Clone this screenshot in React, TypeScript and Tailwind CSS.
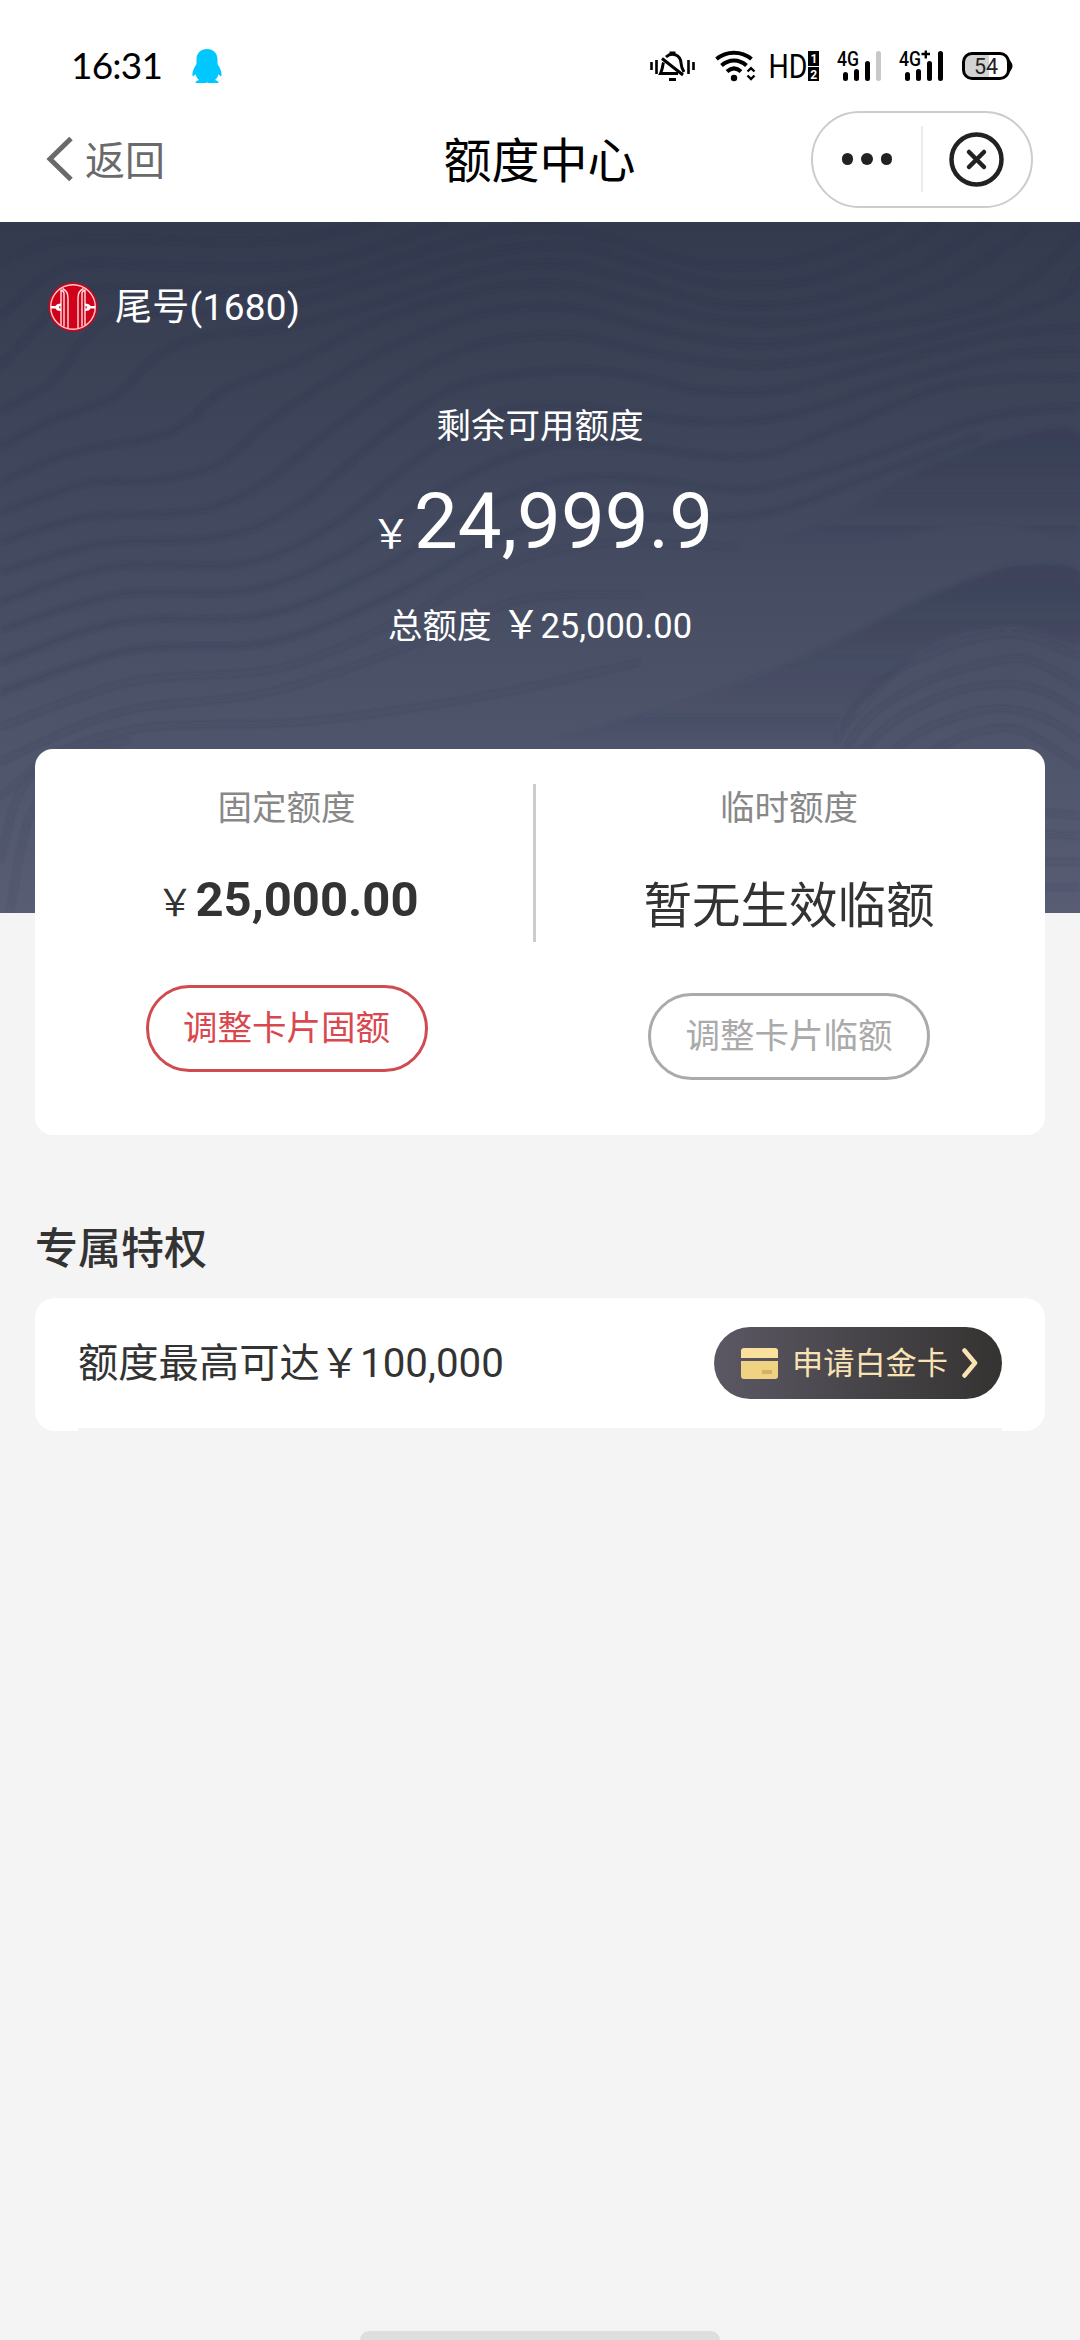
type Point = [number, number];

// Contour lines of the hero background
const contours: Point[][] = [
  [[0, 41], [50, 20], [120, 17], [240, 20], [310, 15], [380, 0]],
  [[0, 95], [41, 58], [86, 41], [172, 45], [275, 45], [344, 35], [450, 0]],
  [[0, 145], [34, 108], [70, 75], [120, 66], [230, 70], [330, 58], [420, 30], [520, 6], [600, 14], [700, 42], [790, 40], [880, 10], [900, 0]],
  [[0, 188], [52, 160], [86, 115], [130, 92], [250, 90], [380, 58], [480, 32], [570, 24], [640, 42], [720, 62], [810, 58], [900, 25], [940, 0]],
  [[0, 225], [52, 198], [114, 175], [145, 145], [172, 125], [213, 113], [286, 105], [379, 81], [480, 50], [560, 42], [640, 60], [720, 82], [820, 78], [920, 45], [990, 0]],
  [[0, 261], [69, 231], [155, 215], [190, 198], [224, 168], [293, 141], [379, 98], [482, 68], [560, 62], [640, 80], [720, 98], [810, 98], [930, 68], [1010, 20], [1030, 0]],
  [[0, 291], [86, 261], [155, 258], [220, 241], [275, 195], [379, 131], [482, 91], [570, 86], [660, 108], [760, 122], [860, 108], [980, 84], [1050, 40], [1080, 5]],
  [[0, 320], [86, 295], [189, 290], [258, 265], [327, 211], [413, 151], [490, 120], [575, 114], [660, 132], [760, 143], [870, 128], [1000, 96], [1060, 75], [1080, 48]],
  [[0, 350], [100, 322], [220, 315], [300, 282], [380, 215], [460, 164], [560, 148], [625, 152], [700, 168], [780, 168], [880, 142], [1000, 113], [1080, 106]],
  [[0, 380], [110, 345], [240, 342], [330, 305], [420, 235], [500, 190], [580, 185], [690, 199], [780, 195], [880, 165], [1000, 134], [1080, 130]],
  [[0, 408], [120, 372], [250, 368], [350, 328], [440, 268], [530, 228], [609, 222], [747, 235], [833, 208], [953, 163], [1080, 155]],
  [[0, 440], [120, 400], [260, 394], [370, 352], [460, 298], [540, 263], [612, 255], [712, 265], [764, 265], [850, 241], [988, 195], [1080, 185]],
  [[0, 470], [130, 428], [270, 420], [390, 374], [480, 325], [570, 292], [680, 296], [770, 290], [860, 258], [980, 214]],
];

// Fainter lines towards the bottom left and on the mound at the right
const faintContours: Point[][] = [
  [[0, 505], [130, 460], [280, 446], [400, 398], [500, 345], [600, 322], [740, 325]],
  [[0, 540], [120, 490], [270, 470], [420, 420], [520, 378], [640, 372]],
  [[0, 575], [60, 530], [150, 505], [300, 500], [480, 475], [640, 440]],
  [[0, 640], [20, 570], [60, 535], [130, 518]],
  [[10, 690], [28, 600], [60, 560], [120, 532]],
  [[836, 520], [857, 481], [902, 445], [970, 418], [1022, 413], [1080, 435]],
  [[846, 525], [875, 490], [930, 458], [1000, 438], [1035, 440], [1080, 464]],
  [[860, 530], [900, 495], [960, 468], [1010, 462], [1045, 470], [1080, 490]],
  [[890, 530], [930, 505], [990, 487], [1040, 494], [1080, 518]],
  [[930, 530], [970, 512], [1020, 508], [1080, 545]],
  [[1040, 590], [1080, 594]],
  [[1040, 612], [1080, 614]],
  [[1040, 640], [1080, 640]],
  [[1040, 665], [1080, 665]],
];

const folds: Point[][] = [
  [[740, 325], [833, 298], [919, 248], [1005, 217], [1080, 213], [1080, 310], [980, 300], [880, 320]],
  [[540, 518], [660, 487], [764, 451], [833, 421], [919, 378], [988, 351], [1030, 342], [1080, 351], [1080, 420], [1010, 405], [920, 430], [830, 527]],
];

// Catmull-Rom spline through the given points
const spline = (pts: Point[]) => {
  let d = `M${pts[0][0]} ${pts[0][1]}`;
  for (let i = 0; i < pts.length - 1; i++) {
    const p0 = pts[i - 1] ?? pts[i];
    const p1 = pts[i];
    const p2 = pts[i + 1];
    const p3 = pts[i + 2] ?? p2;
    d += `C${p1[0] + (p2[0] - p0[0]) / 6} ${p1[1] + (p2[1] - p0[1]) / 6} ${p2[0] - (p3[0] - p1[0]) / 6} ${p2[1] - (p3[1] - p1[1]) / 6} ${p2[0]} ${p2[1]}`;
  }
  return d;
};

const Waves = () => (
  <svg className="absolute inset-0 h-full w-full" viewBox="0 0 1080 691" fill="none">
    <defs>
      <linearGradient id="fold" x1="0" y1="0" x2="0" y2="1">
        <stop offset="0" stopColor="#2f3550" stopOpacity="0.4" />
        <stop offset="1" stopColor="#2f3550" stopOpacity="0" />
      </linearGradient>
      <filter id="soft" x="-5%" y="-5%" width="110%" height="110%">
        <feGaussianBlur stdDeviation="2.2" />
      </filter>
    </defs>
    <g filter="url(#soft)">
      {folds.map((f, i) => (
        <path key={i} d={spline(f)} fill="url(#fold)" />
      ))}
      {contours.map((c, i) => (
        <path key={i} d={spline(c)} stroke="#2b3048" strokeOpacity="0.24" strokeWidth="5" />
      ))}
      {faintContours.map((c, i) => (
        <path key={i} d={spline(c)} stroke="#2b3048" strokeOpacity="0.15" strokeWidth="5" />
      ))}
    </g>
  </svg>
);

const StatusBar = () => (
  <div className="flex h-[102px] items-center justify-between pt-[30px] pr-[67px] pl-[71px]">
    <div className="flex items-center">
      <span className="mb-[3px] w-[121px] font-['Lato'] text-[37px] leading-none tracking-[-0.8px] text-black">16:31</span>
      <svg width="30" height="34" viewBox="0 0 30 34" fill="#00c8ff">
        <path d="M15 0C8.500 0 4.500 4.500 4.500 10.500V15C2.500 18 0 22.500 0.500 26.500C0.800 28 2.300 27 3.500 25C4 27.500 5.200 29.500 7 31C5 31.500 3.500 32.300 3.500 34H14L15 33.300L16 34H26.500C26.500 32.300 25 31.500 23 31C24.800 29.500 26 27.500 26.500 25C27.700 27 29.200 28 29.500 26.500C30 22.500 27.500 18 25.500 15V10.500C25.500 4.500 21.500 0 15 0Z" />
      </svg>
    </div>
    <svg width="364" height="60" viewBox="648 36 364 60" fill="none" stroke="#000">
      {/* silent bell */}
      <g strokeWidth="2.600">
        <path d="M650.500 62V70M655.500 60V74M692.500 62V70M687.500 60V74" />
        <path d="M662.500 62.500C661.500 65 662 68 659.500 73.500H677M665 57C671 51.500 679.500 55 680 63C680.300 67 681 69 683 72M661 58.500L682 75" strokeWidth="3" />
        <path d="M668.500 53H674.500M668 79.500H675" strokeWidth="3" />
      </g>
      {/* wifi */}
      <g strokeWidth="4">
        <path d="M715.500 59C725.500 50.500 740.500 50.500 750.500 59M720.500 65.500C728 58.800 738 58.800 745.500 65.500M726 71.500C730.500 67.500 735.500 67.500 740 71.500" />
      </g>
      <circle cx="733" cy="78" r="3.200" fill="#000" stroke="none" />
      <path d="M746.500 71.500L750 68.200L753.500 71.500M746.500 75.500L750 79L753.500 75.500" strokeWidth="2.400" />
      {/* HD */}
      <text x="767.500" y="78" fontFamily="Roboto" fontSize="33" fill="#000" stroke="none" textLength="39" lengthAdjust="spacingAndGlyphs">HD</text>
      <rect x="807" y="51" width="11" height="15" fill="#000" stroke="none" />
      <rect x="807" y="67" width="11" height="14" fill="#000" stroke="none" />
      <text x="809.500" y="63" fontFamily="Roboto" fontWeight="700" fontSize="12" fill="#fff" stroke="none">1</text>
      <text x="809.300" y="78.500" fontFamily="Roboto" fontWeight="700" fontSize="12" fill="#fff" stroke="none">2</text>
      {/* signals */}
      <text x="836" y="66" fontFamily="Roboto" fontWeight="500" fontSize="20" fill="#000" stroke="none" textLength="22" lengthAdjust="spacingAndGlyphs">4G</text>
      <g strokeWidth="5" strokeLinecap="round">
        <path d="M844.500 74.500V78.500M855.500 71.500V78.500M866.500 63.500V78.500" />
        <path d="M877.500 53.500V78.500" stroke="#c8c8c8" />
        <path d="M906.500 74.500V78.500M917.500 71.500V78.500M928.500 63.500V78.500M939.500 53.500V78.500" />
      </g>
      <text x="898" y="66" fontFamily="Roboto" fontWeight="500" fontSize="20" fill="#000" stroke="none" textLength="22" lengthAdjust="spacingAndGlyphs">4G</text>
      <path d="M920.500 54H929M924.800 50.500V58.500" strokeWidth="2.400" />
      {/* battery */}
      <path d="M971 54H988V78H971Q963 78 963 70V62Q963 54 971 54Z" fill="#d2d2d2" stroke="none" />
      <rect x="962.500" y="53.500" width="45" height="25" rx="8.500" strokeWidth="3" />
      <path d="M1009 62Q1012 66 1009 70Z" fill="#000" strokeWidth="2" />
      <text x="973" y="73.500" fontFamily="Roboto" fontSize="21.500" fill="#222" stroke="none">54</text>
    </svg>
  </div>
);

const NavBar = () => (
  <div className="flex h-[120px] items-center justify-between pr-[47px] pb-[6px] pl-[45px]">
    <div className="flex w-[223px] items-center gap-[12px] text-[#6a6a6a]">
      <svg width="28" height="44" viewBox="0 0 28 44" fill="none" stroke="currentColor" strokeWidth="5">
        <path d="M26 1.500L5 22L26 42.500" />
      </svg>
      <span className="mt-[5px] text-[40px] leading-none">返回</span>
    </div>
    <h1 className="mt-[5px] text-[48px] leading-none text-black">额度中心</h1>
    <div className="flex h-[97px] w-[222px] items-center rounded-full border-2 border-[#cccccc]">
      <div className="flex h-[66px] w-[110px] items-center justify-center gap-[8px] border-r-2 border-[#ebebeb]">
        <i className="size-[11.500px] rounded-full bg-[#222222]" />
        <i className="size-[11.500px] rounded-full bg-[#222222]" />
        <i className="size-[11.500px] rounded-full bg-[#222222]" />
      </div>
      <svg className="ml-[26px]" width="55" height="55" viewBox="0 0 55 55" fill="none" stroke="#222">
        <circle cx="27.500" cy="27.500" r="25" strokeWidth="4.500" />
        <path d="M20 20L35 35M35 20L20 35" strokeWidth="4.500" strokeLinecap="round" />
      </svg>
    </div>
  </div>
);

const BankLogo = () => (
  <svg width="50" height="50" viewBox="0 0 50 50" fill="none">
    <circle cx="25" cy="25" r="24.500" fill="#d0021b" />
    <circle cx="25" cy="25" r="22.300" stroke="#ffc9c9" strokeWidth="1.400" />
    <g stroke="#ffdcdc" strokeWidth="1.400">
      <path d="M13 7.500V43M16 44.500V11.500Q16 9 13 8M20 46.500V16Q20 9 14.500 6.500" />
      <path d="M37 7.500V43M34 44.500V11.500Q34 9 37 8M30 46.500V16Q30 9 35.500 6.500" />
    </g>
    <path d="M3 24H7.500Q8.500 21.500 13 21.500V23.500Q11 24 11 25.300Q11 26.500 13 27V29Q8.500 29 7.500 26.500H3ZM47 24H42.500Q41.500 21.500 37 21.500V23.500Q39 24 39 25.300Q39 26.500 37 27V29Q41.500 29 42.500 26.500H47Z" fill="#fff" />
  </svg>
);

const Hero = () => (
  <section className="relative h-[691px] bg-linear-to-b from-[#343a4e] via-[#454c61] to-[#585d74] text-white">
    <Waves />
    <div className="relative flex flex-col items-center">
      <div className="flex w-full items-center gap-[17px] pt-[58px] pl-[48px]">
        <BankLogo />
        <span className="mt-[3px] text-[37px] leading-[50px] tracking-[0.3px]">尾号(1680)</span>
      </div>
      <p className="mt-[68px] text-[34.500px] leading-[50px]">剩余可用额度</p>
      <p className="mt-[26px] ml-[4px] flex items-baseline leading-[90px]">
        <span className="mr-[3px] text-[40px]">￥</span>
        <span className="text-[78px]">24,999.9</span>
      </p>
      <p className="mt-[20px] flex items-baseline text-[34.500px] leading-[50px]">
        <span>总额度</span>
        <span className="ml-[10px] text-[39px]">￥</span>
        <span>25,000.00</span>
      </p>
    </div>
  </section>
);

const LimitCard = () => (
  <section className="relative mx-[35px] -mt-[164px] flex h-[386px] rounded-[18px] bg-white">
    <div className="flex w-[503px] flex-col items-center">
      <p className="mt-[34px] text-[34.500px] leading-[50px] text-[#888888]">固定额度</p>
      <p className="mt-[32px] ml-[2px] flex items-baseline leading-[70px] text-[#333333]">
        <span className="mr-[2px] text-[37px]">￥</span>
        <span className="text-[49px] font-bold">25,000.00</span>
      </p>
      <button className="mt-[46px] h-[87px] w-[282px] rounded-full border-3 border-[#cf4b50] text-[34.500px] leading-none text-[#d9484e]">
        调整卡片固额
      </button>
    </div>
    <div className="-ml-[5px] mt-[35px] h-[158px] w-[3px] bg-[#cccccc]" />
    <div className="ml-[2px] flex w-[502px] flex-col items-center">
      <p className="mt-[34px] text-[34.500px] leading-[50px] text-[#888888]">临时额度</p>
      <p className="mt-[39px] text-[48.500px] leading-[70px] text-[#333333]">暂无生效临额</p>
      <button className="mt-[51px] h-[87px] w-[282px] rounded-full border-3 border-[#aaaaaa] text-[34.500px] leading-none text-[#aaaaaa]">
        调整卡片临额
      </button>
    </div>
  </section>
);

const Privileges = () => (
  <section className="mx-[35px] mt-[84px]">
    <h2 className="text-[43px] leading-[60px] font-medium text-[#333333]">专属特权</h2>
    <div className="mt-[19px] rounded-[20px] bg-white px-[43px]">
      <div className="flex h-[133px] items-center justify-between border-b-3 border-[#f4f4f4]">
        <span className="mt-[2px] text-[40.300px] leading-none text-[#333333]">额度最高可达￥100,000</span>
        <button className="flex h-[72px] w-[288px] items-center rounded-full bg-linear-to-r from-[#5b5864] to-[#353331] pl-[27px] text-[31.200px] leading-none text-[#f9e2b4]">
          <svg width="37" height="31" viewBox="0 0 37 31">
            <path d="M3 0H34Q37 0 37 3V10H0V3Q0 0 3 0Z" fill="#fadf9d" />
            <path d="M0 13H37V28Q37 31 34 31H3Q0 31 0 28Z" fill="#f0d283" />
            <rect x="21" y="22" width="10" height="4" fill="#d3b165" />
          </svg>
          <span className="mt-[2px] ml-[14px]">申请白金卡</span>
          <svg className="ml-[14px]" width="16" height="30" viewBox="0 0 16 30" fill="none" stroke="currentColor" strokeWidth="4.500" strokeLinecap="round" strokeLinejoin="round">
            <path d="M2.500 2.500L13 15L2.500 27.500" />
          </svg>
        </button>
      </div>
    </div>
  </section>
);

const App = () => {
  return (
    <div className="flex h-[2340px] w-[1080px] flex-col overflow-hidden bg-[#f4f4f4] font-[Roboto,'Noto_Sans_CJK_SC',sans-serif]">
      <header className="bg-white">
        <StatusBar />
        <NavBar />
      </header>
      <Hero />
      <LimitCard />
      <Privileges />
      <div className="mx-auto mt-auto h-[9px] w-[360px] rounded-t-full bg-[#dedede]" />
    </div>
  );
};

export default App;
